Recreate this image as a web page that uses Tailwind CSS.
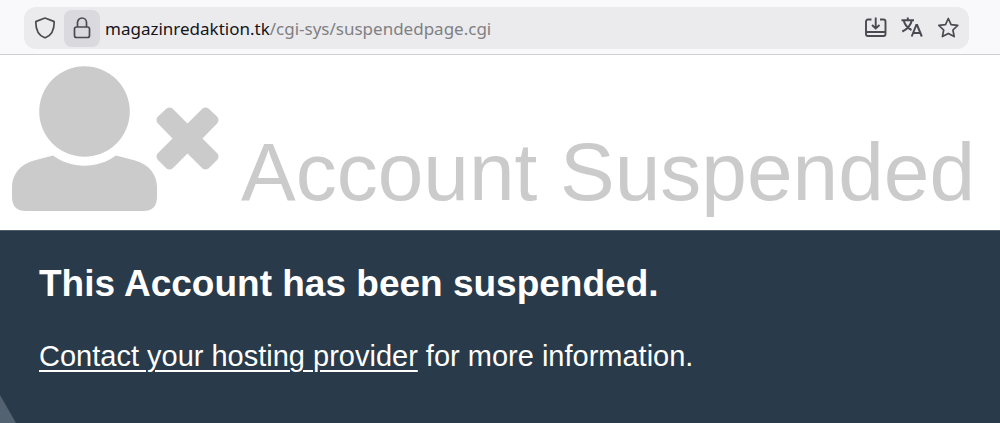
<!DOCTYPE html>
<html lang="en">
<head>
<meta charset="utf-8">
<meta name="viewport" content="width=device-width, initial-scale=1">
<title>Account Suspended</title>
<script src="https://cdn.jsdelivr.net/npm/@tailwindcss/browser@4"></script>
</head>
<body class="flex min-h-screen flex-col bg-white font-['Liberation_Sans',Arial,sans-serif]">
  <nav aria-label="Browser toolbar" class="border-b border-[#cfcfd3] bg-[#f9f9fb] pt-[7px] pr-[31px] pb-[5px] pl-6">
    <div class="flex h-[42px] items-center rounded-xl bg-[#ebebed] pr-[9px] pl-[9px] text-[#4b4a52]">
      <button type="button" aria-label="Tracking protection" class="grid h-10 w-6 place-items-center">
        <svg class="h-6 w-6" viewBox="0 0 24 24" fill="none" stroke="currentColor" stroke-width="1.7" stroke-linejoin="round"><path d="M11.3 2.3 3.3 5.4Q2.8 5.6 2.8 6.2C2.800 13.500 5.500 19.200 11.300 21.500Q12 21.800 12.700 21.500C18.500 19.200 21.200 13.500 21.200 6.200Q21.200 5.600 20.700 5.400L12.700 2.300Q12 2 11.300 2.300Z"/></svg>
      </button>
      <button type="button" aria-label="Site information" class="ml-[7px] grid h-[37px] w-9 place-items-center rounded-lg bg-[#d9d9de]">
        <svg class="h-6 w-6" viewBox="0 0 24 24" fill="none" stroke="currentColor" stroke-width="1.7"><rect x="4.500" y="11" width="15" height="10.500" rx="2"/><path d="M7.500 11V6.500a4.500 4.500 0 0 1 9 0V11"/></svg>
      </button>
      <div role="textbox" aria-label="Address" contenteditable="true" spellcheck="false" class="ml-[5px] min-w-0 flex-1 truncate pt-px font-['Noto_Sans','Open_Sans',sans-serif] text-[17px] leading-6 text-[#808084] outline-none"><span class="text-[#15141a]">magazinredaktion.tk</span>/cgi-sys/suspendedpage.cgi</div>
      <div class="flex items-center gap-3">
        <button type="button" aria-label="Install page" class="grid size-6 place-items-center">
          <svg class="size-6" viewBox="0 0 24 24" fill="none" stroke="currentColor" stroke-width="1.9"><path d="M7.500 3.500H4A2 2 0 0 0 2 5.500V18a2 2 0 0 0 2 2H19.500a2 2 0 0 0 2-2V5.500a2 2 0 0 0-2-2H16M2 16H21.500M11.700 1.500v10.500M8 9l3.700 3.500L15.500 9"/></svg>
        </button>
        <button type="button" aria-label="Translate" class="grid size-6 place-items-center">
          <svg class="size-6" viewBox="0 0 24 24" fill="none" stroke="currentColor" stroke-width="2"><path d="M1.500 4.200H14M7.800 1.500V4.200M3.700 4.500C5 9.500 8.500 12.500 11.500 14M11.800 4.500C10.700 9.500 6.500 13.500 2.300 15.500M11.700 20.500 16.300 9h.8l4.700 11.500M13.300 17H20.500"/></svg>
        </button>
        <button type="button" aria-label="Bookmark this page" class="grid size-6 place-items-center">
          <svg class="size-6" viewBox="0 0 24 24" fill="none" stroke="currentColor" stroke-width="1.700" stroke-linejoin="round"><path d="M12.300 2.500 15.100 8.600 21.800 9.400 16.900 14 18.200 20.600 12.300 17.400 6.400 20.600 7.700 14 2.800 9.400 9.500 8.600Z"/></svg>
        </button>
      </div>
    </div>
  </nav>

  <header class="flex items-end gap-[22px] px-3 pt-[11px] text-[#cbcbcb]">
    <svg aria-hidden="true" class="mb-[19px] h-[145px] w-[207px] shrink-0" viewBox="0 0 207 145" fill="currentColor">
      <circle cx="72.500" cy="45.500" r="45.300"/>
      <path d="M41 89.500 22 94.500C8 98.500 0 108.500 0 121V131Q0 145 14 145H131Q145 145 145 131V121C145 108.500 137 98.500 123 94.500L104 89.500C86 103 59 103 41 89.500Z"/>
      <path d="M145.500 51 154.500 42.500Q157.500 40.500 160.500 42.500L175.500 57.500 190.500 42.500Q193.500 40.500 196.500 42.500L205.500 51Q207.500 54 205.500 57L190.500 72.500 205.500 87.500Q207.500 90.500 205.500 93.500L196.500 102.500Q193.500 104.500 190.500 102.500L175.500 87.500 160.500 102.500Q157.500 104.500 154.500 102.500L145.500 93.500Q143.500 90.500 145.500 87.500L160.500 72.500 145.500 57Q143.500 54 145.500 51Z"/>
    </svg>
    <h1 class="pb-[11px] text-[82px] leading-[94px] whitespace-nowrap">Account Suspended</h1>
  </header>

  <main class="relative flex-1 overflow-hidden border-t border-[#4d5f6c] bg-[#293a4a] px-[39px] pt-8 pb-12 text-white">
    <h2 class="text-[37px] leading-[42px] font-bold">This Account has been suspended.</h2>
    <p class="mt-[33px] text-[29px] leading-9"><a href="#" class="underline decoration-2 underline-offset-4">Contact your hosting provider</a> for more information.</p>
    <svg aria-hidden="true" class="absolute bottom-0 left-0 h-7 w-4" viewBox="0 0 16 28"><path d="M0 0 16 28H0Z" fill="#536270"/></svg>
  </main>
</body>
</html>
